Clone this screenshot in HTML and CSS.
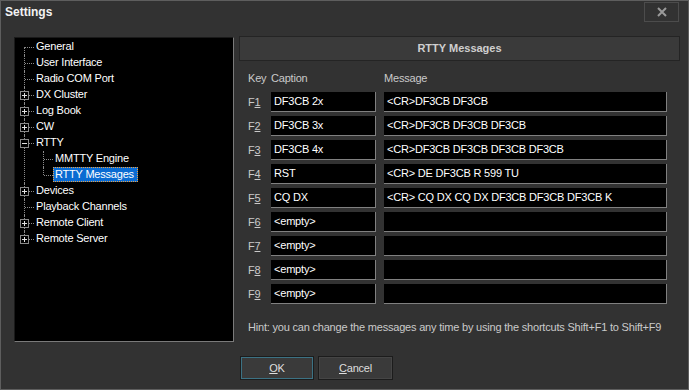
FILE: index.html
```html
<!DOCTYPE html>
<html lang="en">
<head>
    <meta charset="UTF-8">
    <title>Settings</title>
    <link rel="stylesheet" href="styles.css">
</head>
<body>
<div class="window">

    <!-- Title bar -->
    <div class="titlebar">
        <span class="title">Settings</span>
        <div class="close-btn">
            <svg width="10" height="10" viewBox="0 0 10 10"><path d="M1 1 L9 9 M9 1 L1 9" stroke="#9a9a9a" stroke-width="2"/></svg>
        </div>
    </div>

    <div class="main">
        <!-- Tree of pages -->
        <div class="tree-box">
            <ul class="tree">
                <li><span class="node">General</span></li>
                <li><span class="node">User Interface</span></li>
                <li><span class="node">Radio COM Port</span></li>
                <li><span class="toggle plus"></span><span class="node">DX Cluster</span></li>
                <li><span class="toggle plus"></span><span class="node">Log Book</span></li>
                <li><span class="toggle plus"></span><span class="node">CW</span></li>
                <li><span class="toggle"></span><span class="node">RTTY</span>
                    <ul>
                        <li><span class="node">MMTTY Engine</span></li>
                        <li><span class="node selected">RTTY Messages</span></li>
                    </ul>
                </li>
                <li><span class="toggle plus"></span><span class="node">Devices</span></li>
                <li><span class="node">Playback Channels</span></li>
                <li><span class="toggle plus"></span><span class="node">Remote Client</span></li>
                <li><span class="toggle plus"></span><span class="node">Remote Server</span></li>
            </ul>
        </div>

        <!-- RTTY Messages page -->
        <div class="panel">
            <div class="panel-header">RTTY Messages</div>
            <div class="panel-body">
                <div class="messages">
                    <div class="col-label">Key</div>
                    <div class="col-label">Caption</div>
                    <div class="col-label">Message</div>

                    <div class="key">F<u>1</u></div>
                    <div class="field">DF3CB 2x</div>
                    <div class="field">&lt;CR&gt;DF3CB DF3CB</div>

                    <div class="key">F<u>2</u></div>
                    <div class="field">DF3CB 3x</div>
                    <div class="field">&lt;CR&gt;DF3CB DF3CB DF3CB</div>

                    <div class="key">F<u>3</u></div>
                    <div class="field">DF3CB 4x</div>
                    <div class="field">&lt;CR&gt;DF3CB DF3CB DF3CB DF3CB</div>

                    <div class="key">F<u>4</u></div>
                    <div class="field">RST</div>
                    <div class="field">&lt;CR&gt; DE DF3CB R 599 TU</div>

                    <div class="key">F<u>5</u></div>
                    <div class="field">CQ DX</div>
                    <div class="field">&lt;CR&gt; CQ DX CQ DX DF3CB DF3CB DF3CB K</div>

                    <div class="key">F<u>6</u></div>
                    <div class="field">&lt;empty&gt;</div>
                    <div class="field"></div>

                    <div class="key">F<u>7</u></div>
                    <div class="field">&lt;empty&gt;</div>
                    <div class="field"></div>

                    <div class="key">F<u>8</u></div>
                    <div class="field">&lt;empty&gt;</div>
                    <div class="field"></div>

                    <div class="key">F<u>9</u></div>
                    <div class="field">&lt;empty&gt;</div>
                    <div class="field"></div>
                </div>
                <p class="hint">Hint: you can change the messages any time by using the shortcuts Shift+F1 to Shift+F9</p>
            </div>
        </div>
    </div>

    <!-- Buttons -->
    <div class="footer">
        <button class="btn btn-default"><u>O</u>K</button>
        <button class="btn"><u>C</u>ancel</button>
    </div>
</div>
</body>
</html>
```

FILE: styles.css
```css
body {
    margin: 0;
    background-color: #323232;
    font-family: 'Liberation Sans', Arial, sans-serif;
    font-size: 11px;
    letter-spacing: -0.2px;
    color: #e6e6e6;
}

.window {
    width: 689px;
    height: 390px;
    box-sizing: border-box;
    border: 1px solid #5e5e5e;
    background-color: #323232;
}

/* Title bar */
.titlebar {
    height: 23px;
    display: flex;
    justify-content: space-between;
    align-items: flex-start;
    padding-left: 4px;
}

.title {
    font-size: 12px;
    font-weight: bold;
    letter-spacing: 0;
    line-height: 23px;
    color: #f2f2f2;
}

.close-btn {
    width: 35px;
    height: 20px;
    box-sizing: border-box;
    margin: 1px 9px 0 0;
    border: 1px solid #4c4c4c;
    display: flex;
    justify-content: center;
    align-items: center;
}

.main {
    display: flex;
    align-items: flex-start;
    gap: 5px;
    padding: 12px 8px 0 13px;
}

/* Tree */
.tree-box {
    width: 220px;
    height: 305px;
    box-sizing: border-box;
    margin-top: 1px;
    background-color: #000;
    border-top: 1px solid #1a1a1a;
    border-left: 1px solid #1a1a1a;
    border-right: 1px solid #7a7a7a;
    border-bottom: 1px solid #7a7a7a;
}

.tree, .tree ul {
    list-style: none;
    margin: 0;
    padding: 0;
}

.tree {
    padding-top: 1px;
}

.tree li {
    position: relative;
    padding-left: 21px;
    line-height: 16px;
    color: #fff;
    white-space: nowrap;
}

/* dotted connectors */
.tree li::before {
    content: "";
    position: absolute;
    left: 9px;
    top: 0;
    bottom: 0;
    border-left: 1px dotted #8a8a8a;
}

.tree > li:first-child::before {
    top: 8px;
}

.tree li:last-child::before {
    bottom: auto;
    height: 8px;
}

.tree li::after {
    content: "";
    position: absolute;
    left: 10px;
    top: 8px;
    width: 9px;
    border-top: 1px dotted #8a8a8a;
}

.tree ul li {
    padding-left: 19px;
}

.tree ul li::before {
    left: 7px;
}

.tree ul li::after {
    left: 8px;
    width: 9px;
}

.toggle {
    position: absolute;
    z-index: 1;
    left: 5px;
    top: 4px;
    width: 9px;
    height: 9px;
    box-sizing: border-box;
    border: 1px solid #8a8a8a;
    background: linear-gradient(#e0e0e0, #e0e0e0) center / 5px 1px no-repeat, #000;
}

.toggle.plus {
    background: linear-gradient(#e0e0e0, #e0e0e0) center / 5px 1px no-repeat,
                linear-gradient(#e0e0e0, #e0e0e0) center / 1px 5px no-repeat, #000;
}

.node {
    display: inline-block;
    vertical-align: top;
    height: 15px;
    line-height: 15px;
    padding: 0 2px;
    margin-left: -2px;
}

.node.selected {
    padding-right: 4px;
    background-color: #0a6bd2;
    outline: 1px dotted #f0a040;
    outline-offset: -1px;
}

/* Right panel */
.panel {
    width: 441px;
}

.panel-header {
    height: 25px;
    box-sizing: border-box;
    border: 1px solid #242424;
    background-color: #3a3a3a;
    text-align: center;
    font-weight: bold;
    letter-spacing: 0;
    line-height: 23px;
    color: #cfcfcf;
}

.panel-body {
    padding: 10px 0 0 9px;
}

.messages {
    display: grid;
    grid-template-columns: 15px 105px 283px;
    grid-template-rows: 17px;
    grid-auto-rows: 20px;
    column-gap: 8px;
    row-gap: 4px;
}

.col-label {
    line-height: 14px;
    color: #cacaca;
    white-space: nowrap;
}

.key {
    line-height: 20px;
    color: #cacaca;
}

.field {
    box-sizing: border-box;
    background-color: #000;
    border-right: 1px solid #808080;
    border-bottom: 1px solid #808080;
    padding-left: 3px;
    line-height: 19px;
    color: #fff;
    white-space: nowrap;
    overflow: hidden;
}

.hint {
    margin: 16px 0 0 0;
    line-height: 14px;
    color: #cacaca;
    white-space: nowrap;
}

/* Buttons */
.footer {
    display: flex;
    gap: 4px;
    padding-left: 239px;
    margin-top: 14px;
}

.btn {
    width: 75px;
    height: 24px;
    box-sizing: border-box;
    background-color: #3a3a3a;
    border: 1px solid #1c1c1c;
    box-shadow: inset 0 0 0 1px #454545;
    font-family: inherit;
    font-size: 11px;
    letter-spacing: inherit;
    color: #dedede;
    padding: 0;
}

.btn-default {
    width: 74px;
    box-shadow: inset 0 0 0 1px #3c7284;
}
```
